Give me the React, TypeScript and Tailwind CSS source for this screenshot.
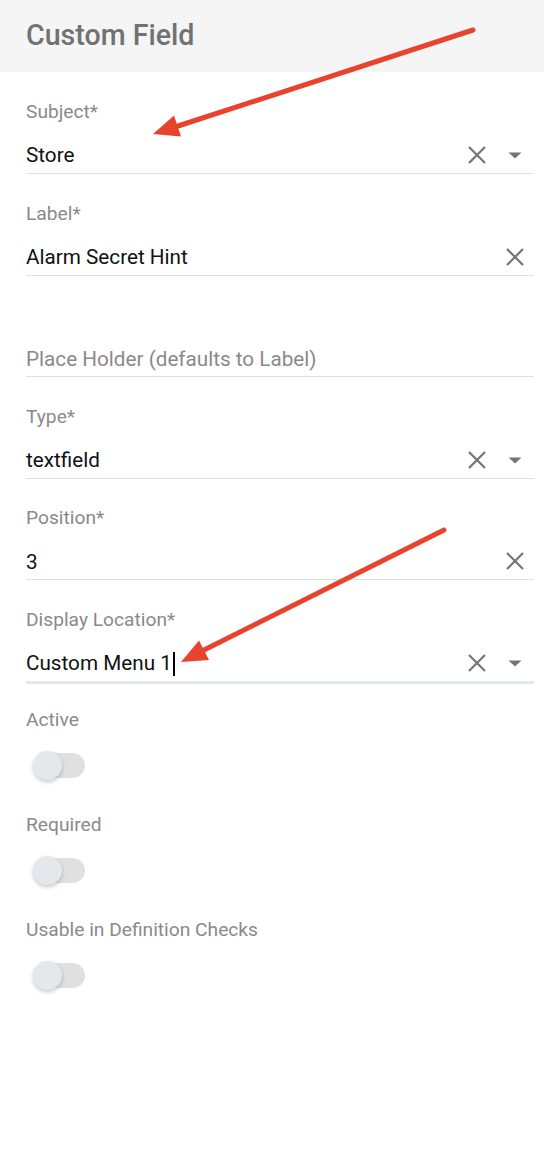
import React from "react";

type Field = {
	label: string;
	value?: string;
	placeholder?: string;
	dropdown?: boolean;
	focused?: boolean;
};

const fields: Field[] = [
	{label: "Subject*", value: "Store", dropdown: true},
	{label: "Label*", value: "Alarm Secret Hint"},
	{label: "", placeholder: "Place Holder (defaults to Label)"},
	{label: "Type*", value: "textfield", dropdown: true},
	{label: "Position*", value: "3"},
	{label: "Display Location*", value: "Custom Menu 1", dropdown: true, focused: true},
];

const toggles = ["Active", "Required", "Usable in Definition Checks"];

function ClearIcon() {
	return (
		<svg width="24" height="24" viewBox="0 0 24 24" className="shrink-0">
			<path d="M4 4L20 20M20 4L4 20" stroke="#757575" strokeWidth="2.2" fill="none"/>
		</svg>
	);
}

function CaretIcon() {
	return (
		<svg width="24" height="24" viewBox="0 0 24 24" className="shrink-0">
			<path d="M5.5 9.5h13L12 15.5z" fill="#757575"/>
		</svg>
	);
}

function TextField({field}: { field: Field }) {
	return (
		<div className={`flex flex-col ${field.focused ? "" : "mb-[28.6px]"}`}>
			<div className="h-[22px] leading-[22px] text-[19.2px] text-[#8a8a8a]">{field.label}</div>
			<div
				className={`mt-[14px] flex items-center ${field.focused ? "h-[39px] border-b-[3px] border-[#e3e7eb]" : "h-[37px] border-b border-[#e0e0e0]"}`}>
				<div className="flex-1 flex items-center pt-[2px] text-[20.7px]">
					{field.value !== undefined ? (
						<span className="text-[#111111]">{field.value}</span>
					) : (
						<span className="text-[#8a8a8a]">{field.placeholder}</span>
					)}
					{field.focused && <span className="ml-[1px] inline-block w-[2px] h-[24px] bg-black"/>}
				</div>
				{field.value !== undefined && (
					<div className="flex items-center pr-[7px]">
						<ClearIcon/>
						{field.dropdown && <div className="ml-[14px]"><CaretIcon/></div>}
					</div>
				)}
			</div>
		</div>
	);
}

function Toggle({label}: { label: string }) {
	return (
		<div className="flex flex-col mb-[34px]">
			<div className="h-[22px] leading-[22px] text-[19.2px] text-[#8a8a8a]">{label}</div>
			<div className="mt-[20px] relative h-[29px] w-[52px] ml-[7px]">
				<div className="absolute left-[3px] top-[2px] h-[25px] w-[49px] rounded-full bg-[#e0e0e0]"/>
				<div
					className="absolute left-0 top-0 h-[29px] w-[29px] rounded-full bg-[#e3e8ed] shadow-[0_2px_4px_rgba(0,0,0,0.22)]"/>
			</div>
		</div>
	);
}

export default function App() {
	return (
		<div className="relative min-h-[1168px] w-full bg-white" style={{fontFamily: "Roboto, 'Noto Sans', sans-serif"}}>
			<div className="h-[72px] bg-[#f5f5f5] flex items-center px-[26px]">
				<h1 className="text-[28.6px] font-medium text-[#727272] -mt-[2px]">Custom Field</h1>
			</div>
			<div className="pl-[26px] pr-[10px] pt-[29px]">
				{fields.map((f, i) => <TextField key={i} field={f}/>)}
				<div className="pt-[25px]">
					{toggles.map((t) => <Toggle key={t} label={t}/>)}
				</div>
			</div>
			<svg className="absolute inset-0 pointer-events-none" width="544" height="1168" viewBox="0 0 544 1168">
				<line x1="473" y1="30" x2="178" y2="126" stroke="#e8432d" strokeWidth="5" strokeLinecap="round"/>
				<polygon points="153,134 174,115.5 181,136.5" fill="#e8432d"/>
				<line x1="444" y1="530" x2="204" y2="650" stroke="#e8432d" strokeWidth="5" strokeLinecap="round"/>
				<polygon points="181,662 199,640.5 209,660" fill="#e8432d"/>
			</svg>
		</div>
	);
}
